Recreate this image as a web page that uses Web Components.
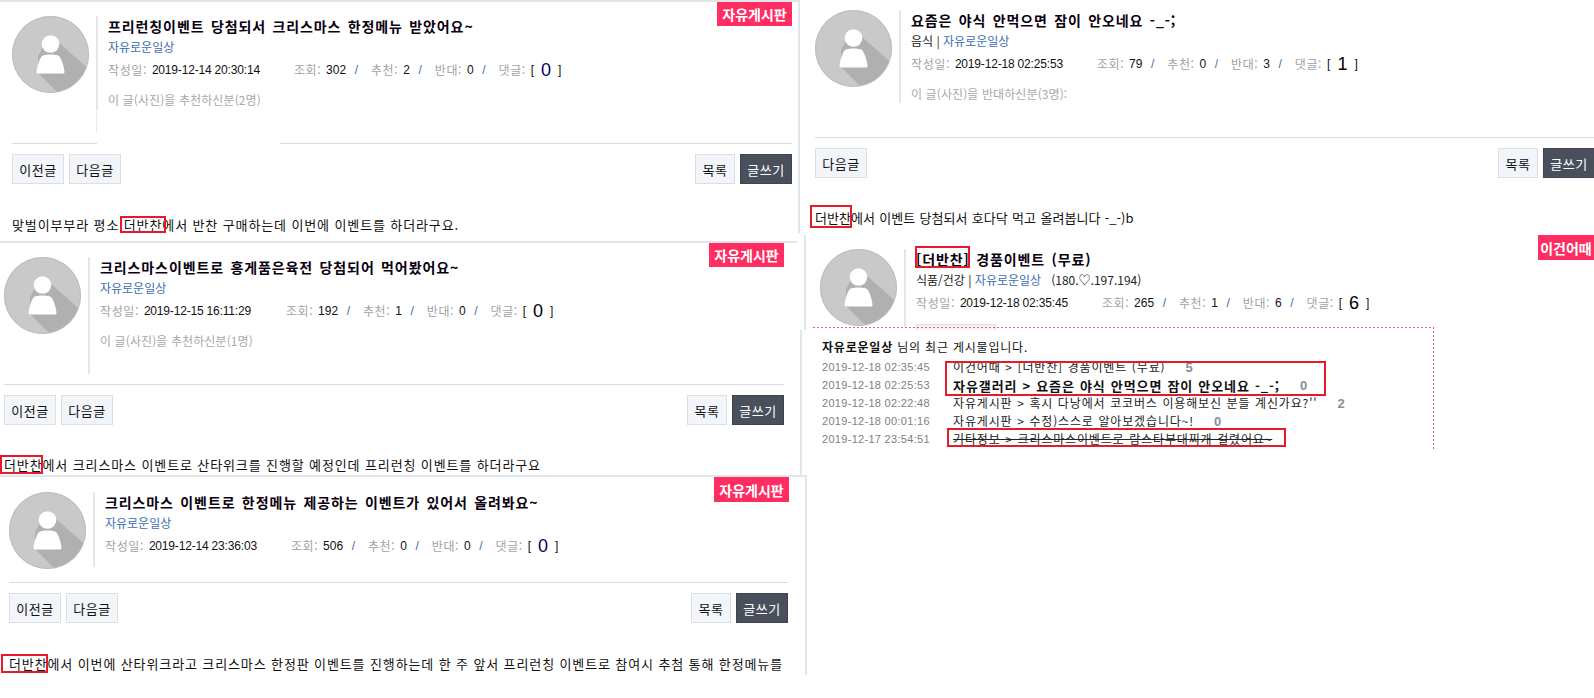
<!DOCTYPE html>
<html lang="ko">
<head>
<meta charset="utf-8">
<title>더반찬</title>
<style>
  html, body { margin: 0; padding: 0; background: #fff; }
  body { position: relative; width: 1594px; height: 698px; overflow: hidden; font-family: "Noto Sans CJK KR", "Liberation Sans", sans-serif; }
  post-panel a { color: #3a6db0; }
</style>
</head>
<body>

<post-panel style="--x:0px;--y:0px;--w:800px;--h:233px;--pad:12px;--pr:6px;--line-h:117px;--gap-hr:10px;--top:2px;--right:2px;--hr-bg:linear-gradient(90deg,#dcdcdc 85px,#fff 85px 268px,#dcdcdc 268px);--vline:linear-gradient(#e4e6e8,#e4e6e8) 0 0/2px 94px no-repeat,linear-gradient(#ececec,#ececec) 0 0/1px 100% no-repeat;--body-top:31px">
  <board-badge slot="badge" style="--bx:717px;--by:-1px">자유게시판</board-badge>
  <span slot="title">프리런칭이벤트 당첨되서 크리스마스 한정메뉴 받았어요~</span>
  <a slot="sub">자유로운일상</a>
  <post-meta slot="meta" date="2019-12-14 20:30:14" views="302" up="2" down="0" comments="0" cc="#00006a"></post-meta>
  <span slot="vote">이 글(사진)을 추천하신분(2명)</span>
  <post-button slot="left">이전글</post-button>
  <post-button slot="left">다음글</post-button>
  <post-button slot="right" style="--bw:40px">목록</post-button>
  <post-button slot="right" dark>글쓰기</post-button>
  <div slot="body">맞벌이부부라 평소 <red-box style="--l:4px;--r:4px;--t:-1px;--b:-2px">더반찬</red-box>에서 반찬 구매하는데 이번에 이벤트를 하더라구요.</div>
</post-panel>

<post-panel style="--x:-8px;--y:241px;--w:805px;--h:234px;--pad:12px;--pr:13px;--line-h:117px;--gap-hr:10px;--top:2px;--body-top:30px">
  <board-badge slot="badge" style="--bx:717px;--by:-1px">자유게시판</board-badge>
  <span slot="title">크리스마스이벤트로 홍게품은육전 당첨되어 먹어봤어요~</span>
  <a slot="sub">자유로운일상</a>
  <post-meta slot="meta" date="2019-12-15 16:11:29" views="192" up="1" down="0" comments="0" cc="#000"></post-meta>
  <span slot="vote">이 글(사진)을 추천하신분(1명)</span>
  <post-button slot="left">이전글</post-button>
  <post-button slot="left">다음글</post-button>
  <post-button slot="right" style="--bw:40px">목록</post-button>
  <post-button slot="right" dark>글쓰기</post-button>
  <div slot="body"><red-box style="--l:4px;--r:0px;--t:0px;--b:-1px">더반찬</red-box>에서 크리스마스 이벤트로 산타위크를 진행할 예정인데 프리런칭 이벤트를 하더라구요</div>
</post-panel>

<post-panel style="--x:-3px;--y:475px;--w:810px;--h:200px;--pad:12px;--pr:17px;--line-h:75px;--gap-hr:13px;--top:2px;--right:2px;--av-top:15px;--body-top:31px">
  <board-badge slot="badge" style="--bx:717px;--by:0px">자유게시판</board-badge>
  <span slot="title">크리스마스 이벤트로 한정메뉴 제공하는 이벤트가 있어서 올려봐요~</span>
  <a slot="sub">자유로운일상</a>
  <post-meta slot="meta" date="2019-12-14 23:36:03" views="506" up="0" down="0" comments="0" cc="#00006a"></post-meta>
  <post-button slot="left">이전글</post-button>
  <post-button slot="left">다음글</post-button>
  <post-button slot="right" style="--bw:40px">목록</post-button>
  <post-button slot="right" dark>글쓰기</post-button>
  <div slot="body"><red-box style="--l:8px;--r:0px;--t:0px;--b:-1px">더반찬</red-box>에서 이번에 산타위크라고 크리스마스 한정판 이벤트를 진행하는데 한 주 앞서 프리런칭 이벤트로 참여시 추첨 통해 한정메뉴를</div>
</post-panel>

<post-panel style="--x:803px;--y:-4px;--w:797px;--h:239px;--pad:12px;--pr:5px;--line-h:93px;--gap-hr:34px;--body-top:30px;--body-size:13px;--body-ls:.04px;--body-ws:.6px">
  <span slot="title">요즘은 야식 안먹으면 잠이 안오네요 -_-;</span>
  <span slot="sub">음식 | <a>자유로운일상</a></span>
  <post-meta slot="meta" date="2019-12-18 02:25:53" views="79" up="0" down="3" comments="1" cc="#000"></post-meta>
  <span slot="vote">이 글(사진)을 반대하신분(3명):</span>
  <post-button slot="left">다음글</post-button>
  <post-button slot="right" style="--bw:40px">목록</post-button>
  <post-button slot="right" dark>글쓰기</post-button>
  <div slot="body"><red-box style="--l:5px;--r:1px;--t:3px;--b:0px">더반찬</red-box>에서 이벤트 당첨되서 호다닥 먹고 올려봅니다 -_-)b</div>
</post-panel>

<post-panel style="--x:804px;--y:235px;--w:790px;--h:95px;--pad:14px;--pr:0px;--line-h:78px;--gap-hr:0px;--av-top:14px;--left:2px;--rule:none">
  <board-badge slot="badge" style="--bx:732px;--by:0px;--bw:56px">이건어때</board-badge>
  <span slot="title"><red-box style="--l:1px;--r:0px;--t:3px;--b:-1px">[더반찬]</red-box> 경품이벤트 (무료)</span>
  <span slot="sub">식품/건강 | <a>자유로운일상</a> &nbsp;&nbsp;(180.♡.197.194)</span>
  <post-meta slot="meta" date="2019-12-18 02:35:45" views="265" up="1" down="6" comments="6" cc="#000"></post-meta>
  <vote-stub slot="vote"></vote-stub>
</post-panel>

<recent-popup style="--x:800px;--y:327px">
  <span slot="head"><b>자유로운일상</b> 님의 최근 게시물입니다.</span>
  <recent-row date="2019-12-18 02:35:45" count="5">이건어때 &gt; [더반찬] 경품이벤트 (무료)</recent-row>
  <recent-row date="2019-12-18 02:25:53" count="0" strong>자유갤러리 &gt; 요즘은 야식 안먹으면 잠이 안오네요 -_-;</recent-row>
  <recent-row date="2019-12-18 02:22:48" count="2">자유게시판 &gt; 혹시 다낭에서 코코버스 이용해보신 분들 계신가요?''</recent-row>
  <recent-row date="2019-12-18 00:01:16" count="0">자유게시판 &gt; 수정)스스로 알아보겠습니다~!</recent-row>
  <recent-row date="2019-12-17 23:54:51" strike>기타정보 &gt; 크리스마스이벤트로 람스타부대찌개 걸렸어요~</recent-row>
  <red-frame slot="frames" style="--fx:145px;--fy:34px;--fw:381px;--fh:35px"></red-frame>
  <red-frame slot="frames" style="--fx:147px;--fy:101px;--fw:339px;--fh:19px"></red-frame>
</recent-popup>

<script>
const KR = '"Noto Sans CJK KR", "Liberation Sans", sans-serif';
const NUM = '"Liberation Sans", "Noto Sans CJK KR", sans-serif';

class UserAvatar extends HTMLElement {
  constructor() {
    super();
    this.attachShadow({ mode: 'open' });
    this.shadowRoot.innerHTML = `
      <style>:host { display: block; width: 77px; height: 77px; flex: none; } svg { display: block; }</style>
      <svg width="77" height="77" viewBox="0 0 77 77">
        <defs><clipPath id="c"><circle cx="38.5" cy="38.5" r="38"/></clipPath></defs>
        <circle cx="38.5" cy="38.5" r="38.5" fill="#c9c9c9"/>
        <g clip-path="url(#c)">
          <path d="M38 19 L80 56 L80 85 L54 85 L26 57 L26 40 Z" fill="#b0b0b0"/>
        </g>
        <circle cx="38.5" cy="38.5" r="38" fill="none" stroke="#bdbdbd" stroke-width="1"/>
        <circle cx="38.5" cy="28" r="8.8" fill="#fff"/>
        <path d="M30 40 C33 38 44 38 47 40 C49 42 52 50 52.5 56 Q52.5 57.5 51 57.5 L26 57.5 Q24.5 57.5 24.5 56 C25 50 28 42 30 40 Z" fill="#fff"/>
      </svg>`;
  }
}
customElements.define('user-avatar', UserAvatar);

class BoardBadge extends HTMLElement {
  constructor() {
    super();
    this.attachShadow({ mode: 'open' });
    this.shadowRoot.innerHTML = `
      <style>
        :host {
          position: absolute; left: var(--bx); top: var(--by);
          width: var(--bw, 75px); height: 25px; box-sizing: border-box;
          display: flex; align-items: center; justify-content: center;
          background: #ff2d62; color: #fff;
          font: bold 14px/1 ${KR}; white-space: nowrap;
        }
      </style><slot></slot>`;
  }
}
customElements.define('board-badge', BoardBadge);

class RedBox extends HTMLElement {
  constructor() {
    super();
    this.attachShadow({ mode: 'open' });
    this.shadowRoot.innerHTML = `
      <style>
        :host { position: relative; display: inline-block; }
        i {
          position: absolute; left: calc(-1 * var(--l)); right: calc(-1 * var(--r));
          top: calc(-1 * var(--t)); bottom: calc(-1 * var(--b));
          border: 2px solid #e8192c; pointer-events: none;
        }
      </style><slot></slot><i></i>`;
  }
}
customElements.define('red-box', RedBox);

class RedFrame extends HTMLElement {
  constructor() {
    super();
    this.attachShadow({ mode: 'open' });
    this.shadowRoot.innerHTML = `
      <style>
        :host {
          position: absolute; left: var(--fx); top: var(--fy);
          width: var(--fw); height: var(--fh); box-sizing: border-box;
          border: 2px solid #e8192c;
        }
      </style>`;
  }
}
customElements.define('red-frame', RedFrame);

class PostButton extends HTMLElement {
  constructor() {
    super();
    this.attachShadow({ mode: 'open' });
    this.shadowRoot.innerHTML = `
      <style>
        :host {
          display: flex; align-items: center; justify-content: center;
          width: var(--bw, 52px); height: 30px; box-sizing: border-box;
          background: #f2f5f9; border: 1px solid #dcdfe0; color: #111;
          font: 13px/1 ${KR}; letter-spacing: .04em; white-space: nowrap;
        }
        :host([dark]) { background: #4a505b; border-color: #3f444e; color: #fff; }
      </style><slot></slot>`;
  }
}
customElements.define('post-button', PostButton);

// top of the vote button that the popup covers in the last post
class VoteStub extends HTMLElement {
  constructor() {
    super();
    this.attachShadow({ mode: 'open' });
    this.shadowRoot.innerHTML = `
      <style>
        :host { display: block; width: 80px; height: 30px; box-sizing: border-box; background: #f2f5f9; border: 1px solid #dcdfe0; }
      </style>`;
  }
}
customElements.define('vote-stub', VoteStub);

class PostMeta extends HTMLElement {
  constructor() {
    super();
    this.attachShadow({ mode: 'open' });
    const a = n => this.getAttribute(n);
    this.shadowRoot.innerHTML = `
      <style>
        :host { display: flex; align-items: center; font: 12px/1 ${NUM}; color: #111; white-space: nowrap; height: 16px; }
        .l { font: 12px/1 ${KR}; color: #a2a2a2; letter-spacing: .6px; margin-right: 5px; }
        .d { letter-spacing: -.18px; width: 142px; }
        .v { margin-right: 8.5px; }
        .s { color: #3a6db0; margin-right: 13px; }
        .c { font-size: 18px; color: ${a('cc')}; margin: 0 7px; }
      </style>
      <span class="l">작성일:</span><span class="d">${a('date')}</span>
      <span class="l">조회:</span><span class="v">${a('views')}</span><span class="s">/</span>
      <span class="l">추천:</span><span class="v">${a('up')}</span><span class="s">/</span>
      <span class="l">반대:</span><span class="v">${a('down')}</span><span class="s">/</span>
      <span class="l">댓글:</span><span>[</span><span class="c">${a('comments')}</span><span>]</span>`;
  }
}
customElements.define('post-meta', PostMeta);

// one pasted capture of a board post, placed on the collage by --x / --y
class PostPanel extends HTMLElement {
  constructor() {
    super();
    this.attachShadow({ mode: 'open' });
    this.shadowRoot.innerHTML = `
      <style>
        :host {
          position: absolute; left: var(--x); top: var(--y);
          width: var(--w); height: var(--h); box-sizing: border-box;
          border-top: var(--top, 0px) solid #e0e6ec;
          border-left: var(--left, 0px) solid #e0e6ec;
          border-right: var(--right, 0px) solid #e0e6ec;
          padding: 0 var(--pr, 8px) 0 var(--pad);
          overflow: hidden; color: #111; display: block;
        }
        .head { display: flex; margin-top: var(--av-top, 14px); }
        .info {
          margin-left: 7px; padding-left: 12px; height: var(--line-h);
          background: var(--vline, linear-gradient(#e4e6e8,#e4e6e8) 0 0/2px 100% no-repeat);
          display: flex; flex-direction: column;
        }
        .title { font: bold 14px/20px ${KR}; letter-spacing: .9px; word-spacing: 1.6px; color: #0a0010; white-space: nowrap; }
        .sub { font: 12px/18px ${KR}; margin-top: 2px; color: #222; white-space: nowrap; }
        .meta { margin-top: 6px; }
        .vote { font: 12px/18px ${KR}; color: #a8a8a8; margin-top: 13px; letter-spacing: .1px; white-space: nowrap; }
        .rule { display: var(--rule, block); height: 1px; margin-top: var(--gap-hr); background: var(--hr-bg, #dcdcdc); }
        .bar { display: flex; justify-content: space-between; margin-top: 10px; }
        .bar div { display: flex; gap: 5px; }
        .body {
          font: var(--body-size, 13px)/20px ${KR}; letter-spacing: var(--body-ls, .88px); word-spacing: var(--body-ws, 0px);
          margin-top: var(--body-top, 30px); white-space: nowrap; color: #111;
        }
      </style>
      <slot name="badge"></slot>
      <div class="head">
        <user-avatar></user-avatar>
        <div class="info">
          <div class="title"><slot name="title"></slot></div>
          <div class="sub"><slot name="sub"></slot></div>
          <div class="meta"><slot name="meta"></slot></div>
          <div class="vote"><slot name="vote"></slot></div>
        </div>
      </div>
      <div class="rule"></div>
      <div class="bar"><div><slot name="left"></slot></div><div><slot name="right"></slot></div></div>
      <div class="body"><slot name="body"></slot></div>`;
  }
}
customElements.define('post-panel', PostPanel);

class RecentRow extends HTMLElement {
  constructor() {
    super();
    this.attachShadow({ mode: 'open' });
    const count = this.getAttribute('count');
    this.shadowRoot.innerHTML = `
      <style>
        :host { display: flex; height: 18px; align-items: center; white-space: nowrap; }
        .d { width: 131px; flex: none; font: 11px/1 ${NUM}; color: #808080; letter-spacing: .3px; }
        .t { font: 12px/1 ${KR}; color: #222; letter-spacing: .85px; word-spacing: .5px; }
        :host([strong]) .t { font-weight: bold; color: #111; font-size: 13px; letter-spacing: .93px; }
        :host([strike]) .t { text-decoration: line-through; }
        .c { font: bold 13px/1 ${NUM}; color: #8a8f95; margin-left: 20px; }
      </style>
      <span class="d">${this.getAttribute('date')}</span>
      <span class="t"><slot></slot></span>
      ${count ? `<span class="c">${count}</span>` : ''}`;
  }
}
customElements.define('recent-row', RecentRow);

class RecentPopup extends HTMLElement {
  constructor() {
    super();
    this.attachShadow({ mode: 'open' });
    this.shadowRoot.innerHTML = `
      <style>
        :host {
          position: absolute; left: var(--x); top: var(--y); width: 634px; height: 122px;
          box-sizing: border-box; display: block;
          background: linear-gradient(transparent 3px, #fff 3px);
          padding: 11px 0 0 22px; color: #111;
        }
        .edge-t { position: absolute; left: 13px; right: 0; top: 0; height: 1px; background: repeating-linear-gradient(90deg, #ee5a88 0 2px, transparent 2px 4px); }
        .edge-r { position: absolute; right: 0; top: 0; bottom: 0; width: 1px; background: repeating-linear-gradient(180deg, #ee5a88 0 2px, transparent 2px 4px); }
        .edge-l { position: absolute; left: 0; top: 3px; width: 2px; height: 145px; background: #e0e6ec; }
        .head { font: 12px/18px ${KR}; letter-spacing: .8px; height: 20px; }
      </style>
      <div class="edge-l"></div><div class="edge-t"></div><div class="edge-r"></div>
      <div class="head"><slot name="head"></slot></div>
      <slot></slot>
      <slot name="frames"></slot>`;
  }
}
customElements.define('recent-popup', RecentPopup);
</script>
</body>
</html>
